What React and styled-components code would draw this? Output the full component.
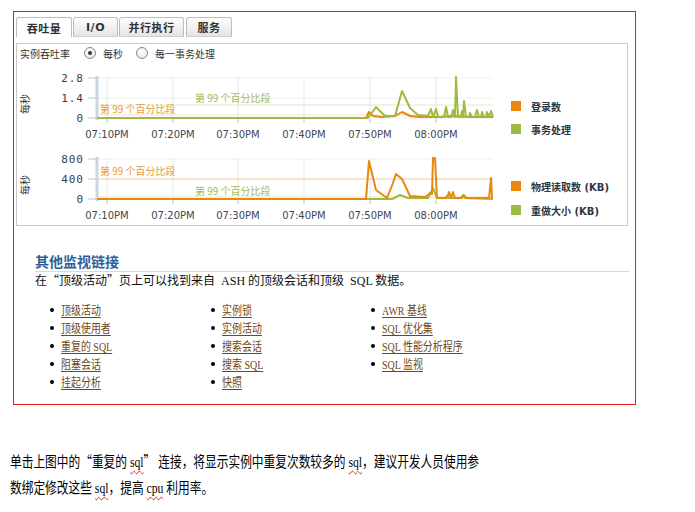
import React from 'react';
import styled, { createGlobalStyle } from 'styled-components';

const Global = createGlobalStyle`
  html, body { margin: 0; padding: 0; background: #fff; }
  body { font-family: "Liberation Serif", "Noto Sans CJK SC", serif; }
`;

const Page = styled.div`
  width: 695px;
  height: 512px;
  padding-top: 11px;
  box-sizing: border-box;
  overflow: hidden;
`;

const Frame = styled.div`
  margin-left: 13px;
  width: 623px;
  height: 394px;
  box-sizing: border-box;
  border: 1px solid #e31c1c;
  padding: 5px 0 0 2px;
`;

const Tabs = styled.div`
  display: flex;
  gap: 1px;
  height: 20px;
`;

const Tab = styled.div`
  width: ${p => p.$w}px;
  margin-right: ${p => p.$mr || 0}px;
  box-sizing: border-box;
  border: 1px solid #bdbdbd;
  border-bottom: ${p => (p.$active ? 'none' : '1px solid #cfcfcf')};
  border-radius: 3px 3px 0 0;
  background: ${p => (p.$active ? '#fff' : 'linear-gradient(#fefefe, #e4e4e4)')};
  display: flex;
  align-items: center;
  justify-content: center;
  font: bold 11px "DejaVu Sans", "Noto Sans CJK SC", sans-serif;
  color: #2f3338;
  letter-spacing: 0.5px;
`;

const Panel = styled.div`
  margin-top: 6px;
  width: 612px;
  height: 183px;
  box-sizing: border-box;
  border: 1px solid #c9c9c9;
  display: flex;
  flex-direction: column;
`;

const RadioRow = styled.div`
  height: 18px;
  display: flex;
  align-items: center;
  padding-left: 3px;
  font: 10px "Noto Sans CJK SC", sans-serif;
  color: #333;
`;

const RadioLabel = styled.span`
  margin-left: ${p => p.$ml || 0}px;
`;

const Radio = styled.span`
  margin-left: ${p => p.$ml || 0}px;
  width: 12px;
  height: 12px;
  box-sizing: border-box;
  border-radius: 50%;
  border: 1px solid #8a8a8a;
  background: radial-gradient(circle at 40% 35%, #ffffff, #e2e2e2);
  display: flex;
  align-items: center;
  justify-content: center;
  &::after {
    content: '';
    width: 4px;
    height: 4px;
    border-radius: 50%;
    background: ${p => (p.$checked ? '#333' : 'transparent')};
  }
`;

const ChartRow = styled.div`
  display: flex;
  height: ${p => p.$h}px;
`;

const Legend = styled.div`
  margin-left: 14px;
  padding-top: ${p => p.$top}px;
  display: flex;
  flex-direction: column;
  gap: ${p => p.$gap}px;
`;

const LegendItem = styled.div`
  height: 14px;
  display: flex;
  align-items: center;
  font: bold 10px "DejaVu Sans", "Noto Sans CJK SC", sans-serif;
  color: #2f3540;
  white-space: nowrap;
`;

const Swatch = styled.span`
  width: 10px;
  height: 10px;
  margin-right: 10px;
  background: ${p => p.$c};
`;

const Section = styled.div`
  margin-top: 28px;
  padding-left: 19px;
`;

const Heading = styled.div`
  width: 594px;
  height: 18px;
  box-sizing: border-box;
  border-bottom: 1px solid #d9dcc9;
  font: bold 14px "Liberation Serif", "Noto Sans CJK SC", serif;
  line-height: 17px;
  color: #2f5f97;
`;

const Intro = styled.div`
  height: 16px;
  line-height: 16px;
  font-size: 12px;
  color: #111;
`;

const LinkGrid = styled.ul`
  list-style: none;
  margin: 13px 0 0 15px;
  padding: 0;
  display: grid;
  grid-template-columns: repeat(3, 160.5px);
  grid-template-rows: repeat(5, 18px);
  grid-auto-flow: column;
`;

const LinkItem = styled.li`
  display: flex;
  align-items: center;
  font-size: 12px;
  white-space: nowrap;
  &::before {
    content: '';
    flex: none;
    width: 4px;
    height: 4px;
    border-radius: 50%;
    background: #000;
    margin-right: 7px;
  }
`;

const Link = styled.a`
  display: inline-block;
  transform: scaleX(0.83);
  transform-origin: left center;
  color: #6e4818;
  text-decoration: underline;
  text-decoration-color: #6e4818;
  text-underline-offset: 2px;
  cursor: pointer;
`;

const Para = styled.p`
  margin: 43px 0 0 10px;
  font-size: 15px;
  line-height: 26px;
  color: #000;
  white-space: nowrap;
  transform: scaleX(0.78);
  transform-origin: left top;
`;

const Spell = styled.span`
  text-decoration: underline wavy #e01010;
  text-decoration-thickness: 1px;
  text-underline-offset: 3px;
`;

const Q = styled.span`
  font-family: "Noto Sans CJK SC", sans-serif;
`;

const ORANGE = '#e8890c';
const GREEN = '#9cbb45';
const TICKS = [
  [107, '07:10PM'],
  [173, '07:20PM'],
  [238, '07:30PM'],
  [304, '07:40PM'],
  [370, '07:50PM'],
  [436, '08:00PM'],
];

const pts = a => a.map(p => p.join(',')).join(' ');

function Chart({ y0, h, top, bottom, yTicks, pct, series, title }) {
  const mid = (top + bottom) / 2 + 6;
  return (
    <svg width="480" height={h} viewBox={`17 ${y0} 480 ${h}`}>
      <text
        x="29"
        y={mid}
        transform={`rotate(-90 29 ${mid})`}
        textAnchor="middle"
        fontFamily="Noto Sans CJK SC, sans-serif"
        fontSize="10"
        fill="#333"
      >
        {title}
      </text>
      <rect x="97" y={top} width="396" height={bottom - top} fill="#fff" />
      {yTicks.map(([y]) => (
        <line key={y} x1="97" x2="493" y1={y} y2={y} stroke="#edf0f3" strokeWidth="1" />
      ))}
      {TICKS.map(([x]) => (
        <line key={x} x1={x} x2={x} y1={top} y2={bottom + 4} stroke="#e3e8ee" strokeWidth="1" />
      ))}
      {TICKS.map(([x]) => (
        <line key={'t' + x} x1={x} x2={x} y1={bottom} y2={bottom + 4} stroke="#c2ccd6" strokeWidth="1" />
      ))}
      <rect x="95.5" y={top - 1} width="3" height={bottom - top + 2} fill="#c9d5e1" />
      {yTicks.map(([y, label]) => (
        <g key={'y' + y}>
          <line x1="88" x2="96" y1={y} y2={y} stroke="#b9c5d1" strokeWidth="1" />
          <text
            x="84"
            y={y + 4}
            textAnchor="end"
            fontFamily="DejaVu Sans Mono, monospace"
            fontSize="11"
            letterSpacing="1"
            fill="#3a4048"
          >
            {label}
          </text>
        </g>
      ))}
      {pct.map(p => (
        <g key={p.c + p.ly}>
          <line x1="97" x2="493" y1={p.ly} y2={p.ly} stroke={p.lc} strokeWidth="1" />
          <text x={p.tx} y={p.ty + 4} fontFamily="Noto Sans CJK SC, sans-serif" fontSize="10" fill={p.c}>
            第 99 个百分比段
          </text>
        </g>
      ))}
      {series.map(s => (
        <polyline
          key={s.c}
          points={pts(s.d)}
          fill="none"
          stroke={s.c}
          strokeWidth="2"
          strokeLinejoin="round"
        />
      ))}
      {TICKS.map(([x, label]) => (
        <text
          key={'l' + x}
          x={x}
          y={bottom + 19}
          textAnchor="middle"
          fontFamily="DejaVu Sans, sans-serif"
          fontSize="10"
          fill="#3f4650"
        >
          {label}
        </text>
      ))}
    </svg>
  );
}

const chart1Orange = [
  [97, 120], [366, 120], [369, 114], [373, 118], [382, 119], [395, 118], [402, 114],
  [410, 118], [420, 119], [440, 119], [452, 118], [470, 119], [493, 119],
];
const chart1Green = [
  [97, 120], [368, 120], [376, 109], [385, 118], [395, 118], [402, 93], [410, 110],
  [418, 117], [428, 118], [431, 111], [433, 119], [436, 111], [438, 119], [444, 119],
  [446, 109], [448, 119], [451, 119], [453, 112], [455, 119], [456, 79], [458, 119],
  [461, 119], [462, 113], [463, 119], [464, 103], [466, 119], [469, 119], [470, 115],
  [472, 119], [475, 119], [477, 112], [479, 119], [481, 119], [482, 114], [484, 119],
  [486, 119], [487, 114], [489, 119], [491, 113], [493, 119],
];
const chart2Orange = [
  [97, 201], [366, 201], [369, 163], [376, 192], [387, 200], [393, 185], [396, 176],
  [402, 181], [410, 198], [425, 199], [428, 197], [430, 195], [432, 196], [433, 160],
  [435, 160], [437, 200], [447, 200], [449, 194], [451, 200], [453, 194], [455, 200],
  [462, 200], [464, 197], [466, 200], [489, 200], [491, 180], [492, 200], [493, 200],
];
const chart2Green = [
  [97, 201], [392, 201], [400, 197], [408, 200], [428, 200], [433, 190], [437, 200],
  [445, 200], [447, 198], [449, 200], [461, 200], [463, 197], [465, 200], [493, 201],
];

const col1 = ['顶级活动', '顶级使用者', '重复的 SQL', '阻塞会话', '挂起分析'];
const col2 = ['实例锁', '实例活动', '搜索会话', '搜索 SQL', '快照'];
const col3 = ['AWR 基线', 'SQL 优化集', 'SQL 性能分析程序', 'SQL 监视'];

export default function App() {
  return (
    <Page>
      <Global />
      <Frame>
        <Tabs>
          <Tab $w={56} $active>吞吐量</Tab>
          <Tab $w={45}>I/O</Tab>
          <Tab $w={65} $mr={1}>并行执行</Tab>
          <Tab $w={46}>服务</Tab>
        </Tabs>
        <Panel>
          <RadioRow>
            <RadioLabel>实例吞吐率</RadioLabel>
            <Radio $ml={14} $checked />
            <RadioLabel $ml={7}>每秒</RadioLabel>
            <Radio $ml={13} />
            <RadioLabel $ml={7}>每一事务处理</RadioLabel>
          </RadioRow>
          <ChartRow $h={82}>
            <Chart
              y0={64}
              h={82}
              top={79}
              bottom={121}
              title="每秒"
              yTicks={[[80, '2.8'], [100, '1.4'], [120, '0']]}
              pct={[
                { c: '#a9b95c', lc: '#e2e7c6', ly: 107, tx: 195, ty: 100 },
                { c: '#e99b3e', lc: '#f6e2c4', ly: 117, tx: 100, ty: 111 },
              ]}
              series={[
                { c: ORANGE, d: chart1Orange },
                { c: GREEN, d: chart1Green },
              ]}
            />
            <Legend $top={37} $gap={9}>
              <LegendItem><Swatch $c={ORANGE} />登录数</LegendItem>
              <LegendItem><Swatch $c={GREEN} />事务处理</LegendItem>
            </Legend>
          </ChartRow>
          <ChartRow $h={79}>
            <Chart
              y0={146}
              h={79}
              top={160}
              bottom={202}
              title="每秒"
              yTicks={[[161, '800'], [181, '400'], [201, '0']]}
              pct={[
                { c: '#e99b3e', lc: '#f6d3a4', ly: 181, tx: 100, ty: 173 },
                { c: '#a9b95c', lc: '#e2e7c6', ly: 199, tx: 195, ty: 193 },
              ]}
              series={[
                { c: GREEN, d: chart2Green },
                { c: ORANGE, d: chart2Orange },
              ]}
            />
            <Legend $top={35} $gap={10}>
              <LegendItem><Swatch $c={ORANGE} />物理读取数 (KB)</LegendItem>
              <LegendItem><Swatch $c={GREEN} />重做大小 (KB)</LegendItem>
            </Legend>
          </ChartRow>
        </Panel>
        <Section>
          <Heading>其他监视链接</Heading>
          <Intro>
            在<Q>“</Q>顶级活动<Q>”</Q>页上可以找到来自&nbsp; ASH 的顶级会话和顶级&nbsp; SQL 数据。
          </Intro>
          <LinkGrid>
            {[...col1, ...col2, ...col3].map(t => (
              <LinkItem key={t}>
                <Link>{t}</Link>
              </LinkItem>
            ))}
          </LinkGrid>
        </Section>
      </Frame>
      <Para>
        单击上图中的<Q>“</Q>重复的 <Spell>sql</Spell><Q>”</Q> 连接，将显示实例中重复次数较多的 <Spell>sql</Spell>，建议开发人员使用参
        <br />
        数绑定修改这些 <Spell>sql</Spell>，提高 <Spell>cpu</Spell> 利用率。
      </Para>
    </Page>
  );
}
